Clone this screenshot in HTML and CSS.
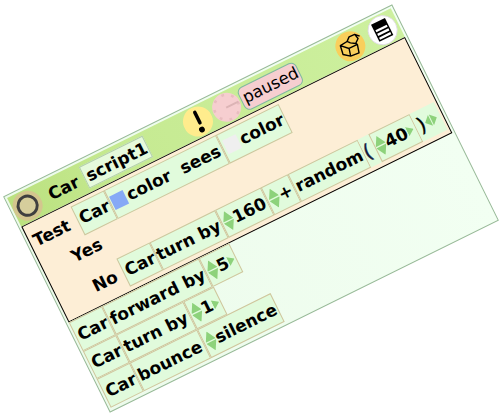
FILE: index.html
```html
<!DOCTYPE html>
<html lang="en">
<head>
<meta charset="utf-8">
<title>Car script1</title>
<link rel="stylesheet" href="styles.css">
</head>
<body>
<svg class="defs" width="0" height="0">
  <symbol id="updown" viewBox="0 0 10 22" preserveAspectRatio="none"><path d="M5 0L10 10.3H0ZM0 11.7H10L5 22Z"/></symbol>
  <symbol id="next" viewBox="0 0 6 10" preserveAspectRatio="none"><path d="M0 0L6 5L0 10Z"/></symbol>
  <symbol id="sides" viewBox="0 0 13 12" preserveAspectRatio="none"><path d="M6 0V12L0 6ZM7 0L13 6L7 12Z"/></symbol>
</svg>
<main class="scriptor">
  <header class="bar">
    <svg class="icon ring" viewBox="0 0 30 30"><circle cx="15" cy="15" r="15" fill="#d3c68e"/><circle cx="15" cy="15" r="9.6" fill="#d6ce9c" stroke="#3f3f3f" stroke-width="2.9"/></svg>
    <span class="owner">Car</span>
    <span class="name">script1</span>
    <svg class="icon bang" viewBox="0 0 30 30"><circle cx="15" cy="15" r="15" fill="#ffec8d"/><path d="M16.2 5.5V17" stroke="#000" stroke-width="3.6" stroke-linecap="round"/><circle cx="15" cy="24" r="2.9"/></svg>
    <svg class="icon clock" viewBox="0 0 30 30"><circle cx="15" cy="15" r="14.5" fill="#f6ced0"/><circle cx="15" cy="15" r="12.5" fill="none" stroke="#e8bdbf" stroke-width="2.6" stroke-dasharray="2.8 7.017"/><path d="M14.5 15H28" stroke="#dcb4b5" stroke-width="2"/></svg>
    <span class="status">paused</span>
    <svg class="icon box" viewBox="0 0 30 30"><circle cx="15" cy="15" r="15" fill="#f9cf5c"/><g fill="none" stroke="#000" stroke-width="1.4" stroke-linejoin="round" transform="rotate(26.3 15 15)"><path d="M5 14.500L13.700 17.300L15.300 25L7.700 23.300ZM13.700 17.300L22 13.300L23.700 21.700L15.300 25M5 14.500L11.700 10.300M20.300 12.300L22 13.300"/><path d="M13.700 5.700L19.300 3.200L22.700 7.300L20.300 12.300L15 11.700L11.700 10.300ZM19.300 3.200L24.300 5"/></g></svg>
    <svg class="icon menu" viewBox="0 0 30 30"><circle cx="15" cy="15" r="14.6" fill="#fff" stroke="#ded8e4" stroke-width=".8"/><rect x="7" y="5" width="15.500" height="19"/><path d="M8.500 13H21M8.500 17H21M8.500 21.200H21" stroke="#fff" stroke-width="2.300"/></svg>
  </header>

  <section class="test">
    <div class="line">
      <span class="label l-test">Test</span>
      <span class="tile w-car">Car</span>
      <span class="tile w-sees"><i class="swatch blue"></i>color<b class="sees">sees</b></span>
      <span class="tile w-color"><i class="swatch pale"></i>color</span>
    </div>
    <div class="line yes"><span class="label l-yes">Yes</span></div>
    <div class="line">
      <span class="label l-no">No</span>
      <span class="tile w-car">Car</span>
      <span class="tile w-turn">turn by</span>
      <span class="tile w-160"><svg class="ud"><use href="#updown"/></svg>160</span>
      <span class="tile w-plus"><svg class="ud"><use href="#updown"/></svg><span class="plus">+</span></span>
      <span class="tile w-random">random</span>
      <span class="tile plain w-open"><span class="paren">(</span></span>
      <span class="tile w-40"><svg class="ud"><use href="#updown"/></svg>40<svg class="next"><use href="#next"/></svg></span>
      <span class="tile plain w-close"><span class="paren">)</span><svg class="sides"><use href="#sides"/></svg></span>
    </div>
  </section>

  <section class="steps">
    <div class="line">
      <span class="tile w-car">Car</span>
      <span class="tile w-forward">forward by</span>
      <span class="tile w-digit"><svg class="ud"><use href="#updown"/></svg>5<svg class="next"><use href="#next"/></svg></span>
    </div>
    <div class="line">
      <span class="tile w-car">Car</span>
      <span class="tile w-turn2">turn by</span>
      <span class="tile w-digit"><svg class="ud"><use href="#updown"/></svg>1<svg class="next"><use href="#next"/></svg></span>
    </div>
    <div class="line">
      <span class="tile w-car">Car</span>
      <span class="tile w-turn2">bounce</span>
      <span class="tile w-silence"><svg class="ud"><use href="#updown"/></svg>silence</span>
    </div>
  </section>
</main>
</body>
</html>
```
FILE: styles.css
```css
* { box-sizing: border-box; }
html, body { margin: 0; overflow: hidden; background: #fff; }
body {
  width: 503px;
  height: 416px;
  padding: 88.4px 0 0 33.7px;
  font: bold 17px/1 "DejaVu Sans", sans-serif;
  color: #000;
}
.defs { position: absolute; }

.scriptor {
  width: 434px;
  height: 241px;
  padding: 2px;
  border: 1px solid #98bb98;
  background: linear-gradient(90deg, #ecfbeb, #f2fff2);
  transform: rotate(-26.3deg);
}

.bar {
  display: flex;
  align-items: center;
  height: 32px;
  background: linear-gradient(90deg, #bbe17f, #c6ea92 30%, #cdf09f);
}
.icon { flex: none; width: 30px; height: 30px; }
.owner { flex: none; width: 39px; margin-left: 9px; }
.name {
  flex: none;
  width: 71px;
  height: 24px;
  padding-left: 2px;
  border: 1px solid #b2ceaa;
  background: #e6fadc;
  line-height: 22px;
  white-space: nowrap;
}
.bang { margin-left: 41px; }
.clock { margin-left: 2px; }
.status {
  flex: none;
  width: 65px;
  height: 25px;
  margin-left: 1px;
  padding-left: 2px;
  border: 1px solid #80b9a0;
  border-radius: 6px;
  background: #f6ced0;
  font-weight: normal;
  font-size: 16.5px;
  line-height: 22px;
}
.box { margin-left: 42px; }
.menu { margin-left: 6px; }

.test {
  height: 107px;
  padding-top: 3px;
  border: 1px solid #000;
  background: #fdeed6;
}
.line { display: flex; height: 31.5px; align-items: center; }
.yes { height: 35px; padding-bottom: 5px; }
.label { flex: none; }
.l-test { width: 52px; padding-left: 4px; }
.l-yes { padding-left: 31px; }
.l-no { width: 70px; padding-left: 37px; }

.tile {
  display: flex;
  flex: none;
  align-items: center;
  height: 31.5px;
  padding-left: 1px;
  border: 1px solid #d0c59d;
  background: #e1fbdc;
  white-space: nowrap;
}
.plain { border-color: transparent; background-clip: border-box; }
.w-car { width: 37px; padding-left: 2px; }
.w-sees { width: 125px; padding-left: 1px; }
.w-color { width: 70px; padding-left: 2px; }
.w-turn { width: 73px; padding-left: 0; }
.w-160 { width: 51px; }
.w-plus { width: 30px; }
.w-random { width: 78px; }
.w-open { width: 12px; }
.w-40 { width: 46px; padding-left: 0; }
.w-close { width: 27px; }
.w-forward { width: 108px; }
.w-turn2 { width: 75px; }
.w-digit { width: 34px; }
.w-silence { width: 82px; }

.swatch { width: 15px; height: 15px; margin-right: 2px; }
.blue { background: #86a9f6; }
.pale { background: #efefef; }
.sees { margin-left: 12px; }

.ud { flex: none; width: 11px; height: 21px; fill: #8dd27b; }
.next { flex: none; width: 7px; height: 10px; fill: #8dd27b; }
.sides { flex: none; width: 13px; height: 12px; fill: #8dd27b; }
.paren { font-weight: normal; font-size: 20px; -webkit-text-stroke: .4px; }
.w-open .paren { margin-left: -2px; color: #10183c; }
.steps { height: 96px; }
.steps .tile { padding-top: 1px; }
```
